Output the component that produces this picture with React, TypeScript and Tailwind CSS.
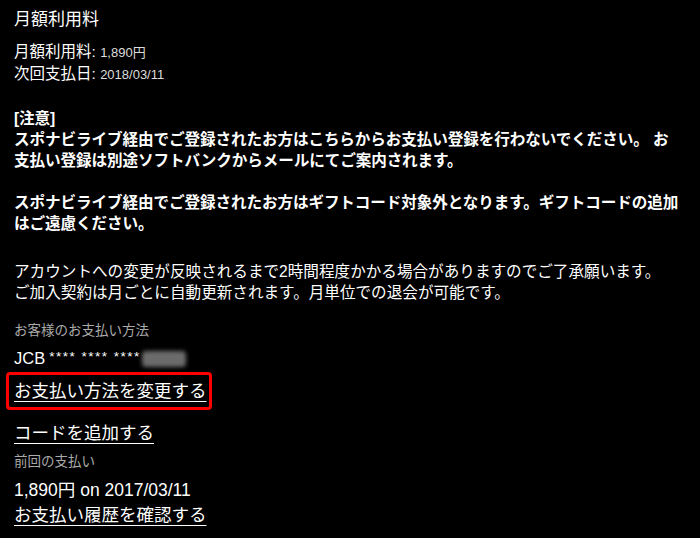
import React from "react";

const font = "font-['Liberation_Sans','Noto_Sans_CJK_JP',sans-serif]";
const link = "block w-fit whitespace-nowrap text-[17.5px] leading-[26px] underline underline-offset-[4px] decoration-1";

export default function App() {
  return (
    <div className={`min-h-[538px] w-[700px] bg-black px-[14px] pt-[8px] text-white ${font}`}>
      <h2 className="text-[17px] leading-[24px]">月額利用料</h2>

      <div className="mt-[9px] text-[15.5px] leading-[21px]">
        <div>
          月額利用料: <span className="text-[13px] text-[#dddddd]">1,890円</span>
        </div>
        <div>
          次回支払日: <span className="text-[13px] text-[#dddddd]">2018/03/11</span>
        </div>
      </div>

      <div className="mt-[23px] whitespace-nowrap text-[15.6px] font-bold leading-[21px] tracking-[-0.1px]">
        <p>[注意]</p>
        <p>
          スポナビライブ経由でご登録されたお方はこちらからお支払い登録を行わないでください。 お
          <br />
          支払い登録は別途ソフトバンクからメールにてご案内されます。
        </p>
        <p className="mt-[21px]">
          スポナビライブ経由でご登録されたお方はギフトコード対象外となります。ギフトコードの追加
          <br />
          はご遠慮ください。
        </p>
      </div>

      <div className="mt-[27px] text-[15.6px] leading-[21px]">
        <p>アカウントへの変更が反映されるまで2時間程度かかる場合がありますのでご了承願います。</p>
        <p>ご加入契約は月ごとに自動更新されます。月単位での退会が可能です。</p>
      </div>

      <div className="mt-[18px] text-[13.5px] leading-[20px] text-[#aaaaaa]">お客様のお支払い方法</div>

      <div className="mt-[7px] flex h-[21px] items-center text-[16.5px]">
        <span>JCB</span>
        <span className="ml-[4px] -mt-[3px] text-[13.5px] tracking-[1.5px]">**** **** ****</span>
        <span className="ml-[1px] h-[16px] w-[44px] rounded-sm bg-[#6b6b6b] blur-[2px]" />
      </div>

      <div className="-ml-[8px] mt-[3px] w-fit rounded-[4px] border-[3px] border-[#ff0000] py-[3px] pl-[5px] pr-[2px]">
        <a className={link}>お支払い方法を変更する</a>
      </div>

      <div className="mt-[10px]">
        <a className={link}>コードを追加する</a>
      </div>

      <div className="mt-[6px] text-[13.5px] leading-[20px] text-[#aaaaaa]">前回の支払い</div>

      <div className="mt-[8px] text-[17.5px] leading-[21px]">1,890円 on 2017/03/11</div>

      <div className="mt-[1px]">
        <a className={link}>お支払い履歴を確認する</a>
      </div>
    </div>
  );
}
